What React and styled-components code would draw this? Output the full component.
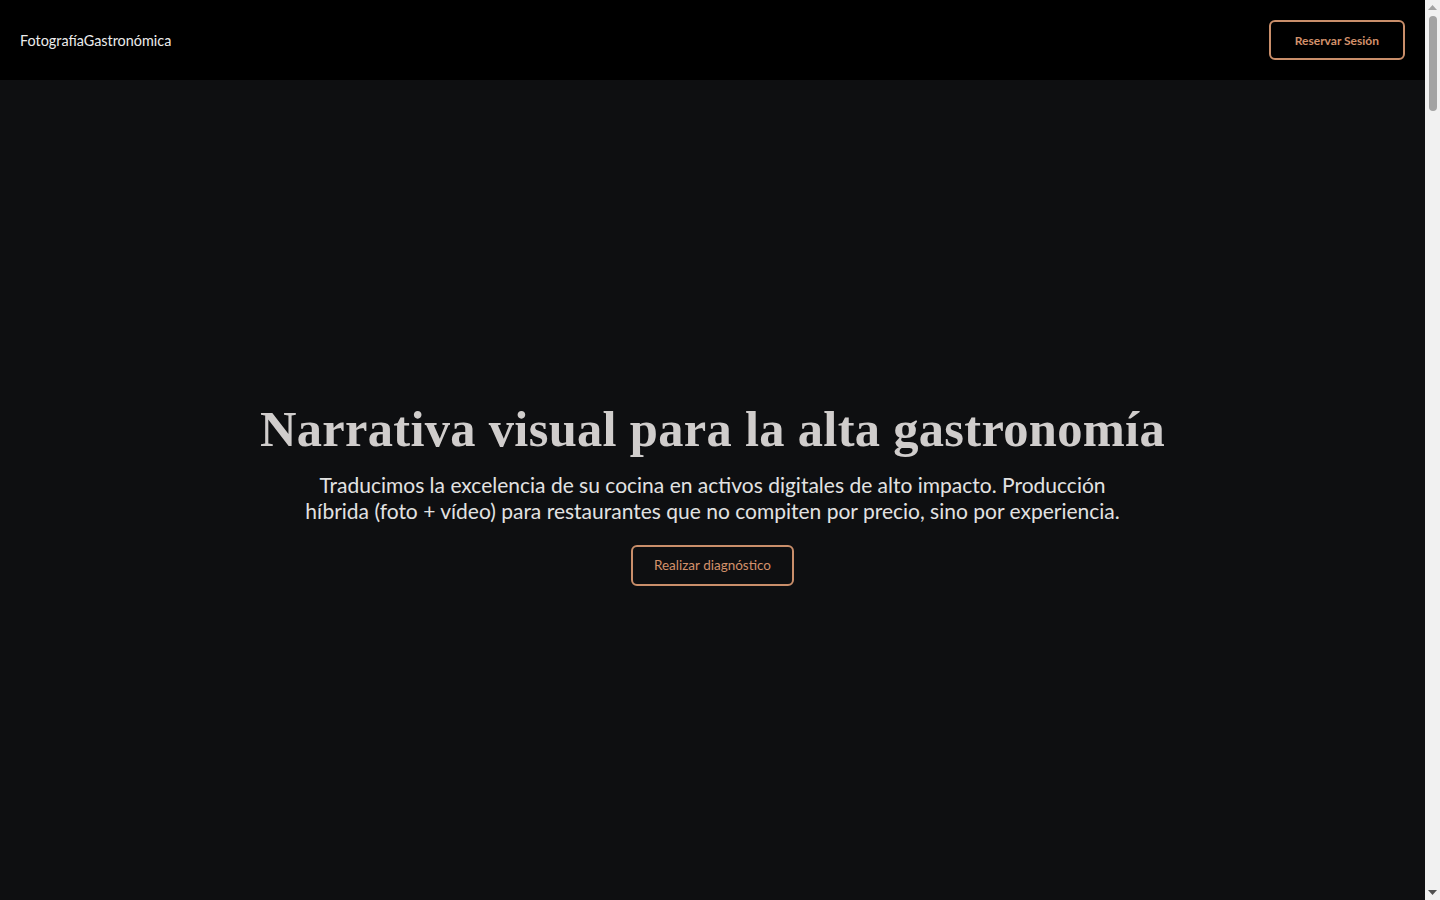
import React from "react";
import styled, { createGlobalStyle } from "styled-components";

const Global = createGlobalStyle`
  html, body { margin: 0; padding: 0; }
  body {
    background: #0e0f11;
    font-family: Lato, "Noto Sans", sans-serif;
    color: #e6e6e6;
    padding-right: 15px;
  }
  * { box-sizing: border-box; }
`;

const Header = styled.header`
  height: 80px;
  background: #000;
  display: flex;
  align-items: center;
  justify-content: space-between;
  padding: 0 20px;
`;

const Logo = styled.div`
  font-size: 14.4px;
  color: #ececec;
`;

const OutlineButton = styled.button`
  font-family: Lato, sans-serif;
  background: transparent;
  color: #d3916b;
  border: 2px solid #c98e6a;
  border-radius: 6px;
  cursor: pointer;
  font-size: ${(p) => (p.$small ? "12px" : "13.5px")};
  font-weight: ${(p) => (p.$small ? 700 : 400)};
  height: ${(p) => (p.$small ? "40px" : "41px")};
  padding: 0 ${(p) => (p.$small ? "24px" : "21px")};
`;

const Hero = styled.section`
  min-height: calc(100vh - 80px);
  display: flex;
  flex-direction: column;
  align-items: center;
  justify-content: center;
  text-align: center;
  padding: 8px 24px 0;
`;

const Title = styled.h1`
  font-family: "Liberation Serif", "DejaVu Serif", serif;
  font-weight: 700;
  font-size: 50.5px;
  letter-spacing: 0.3px;
  line-height: 1.1;
  color: #d0cdcc;
  margin: 0 0 14px;
`;

const Lead = styled.p`
  font-size: 21px;
  line-height: 26px;
  color: #e2e2e2;
  max-width: 840px;
  margin: 0 0 21px;
`;

const Filler = styled.section`
  height: ${(p) => p.$h}px;
  background: #0e0f11;
`;

/* imitation of the browser's scrollbar seen in the reference */
const ScrollTrack = styled.div`
  position: fixed;
  top: 0;
  right: 0;
  width: 15px;
  height: 100vh;
  background: #f1f1f1;
  display: flex;
  flex-direction: column;
  align-items: center;
`;

const ScrollArrow = styled.div`
  height: 15px;
  width: 15px;
  display: flex;
  align-items: center;
  justify-content: center;
`;

const ScrollThumb = styled.div`
  width: 8px;
  height: 95px;
  margin-top: 1px;
  border-radius: 4px;
  background: #a3a3a3;
`;

const ScrollSpacer = styled.div`
  flex: 1;
`;

export default function App() {
  return (
    <>
      <Global />
      <Header>
        <Logo>FotografíaGastronómica</Logo>
        <OutlineButton $small>Reservar Sesión</OutlineButton>
      </Header>
      <Hero>
        <Title>Narrativa visual para la alta gastronomía</Title>
        <Lead>
          Traducimos la excelencia de su cocina en activos digitales de alto impacto. Producción
          híbrida (foto + vídeo) para restaurantes que no compiten por precio, sino por experiencia.
        </Lead>
        <OutlineButton>Realizar diagnóstico</OutlineButton>
      </Hero>
      <Filler $h={6800} />
      <ScrollTrack aria-hidden="true">
        <ScrollArrow>
          <svg width="9" height="5" viewBox="0 0 9 5"><path d="M0 5 L4.5 0 L9 5 Z" fill="#a3a3a3" /></svg>
        </ScrollArrow>
        <ScrollThumb />
        <ScrollSpacer />
        <ScrollArrow>
          <svg width="9" height="5" viewBox="0 0 9 5"><path d="M0 0 L4.5 5 L9 0 Z" fill="#505050" /></svg>
        </ScrollArrow>
      </ScrollTrack>
    </>
  );
}
